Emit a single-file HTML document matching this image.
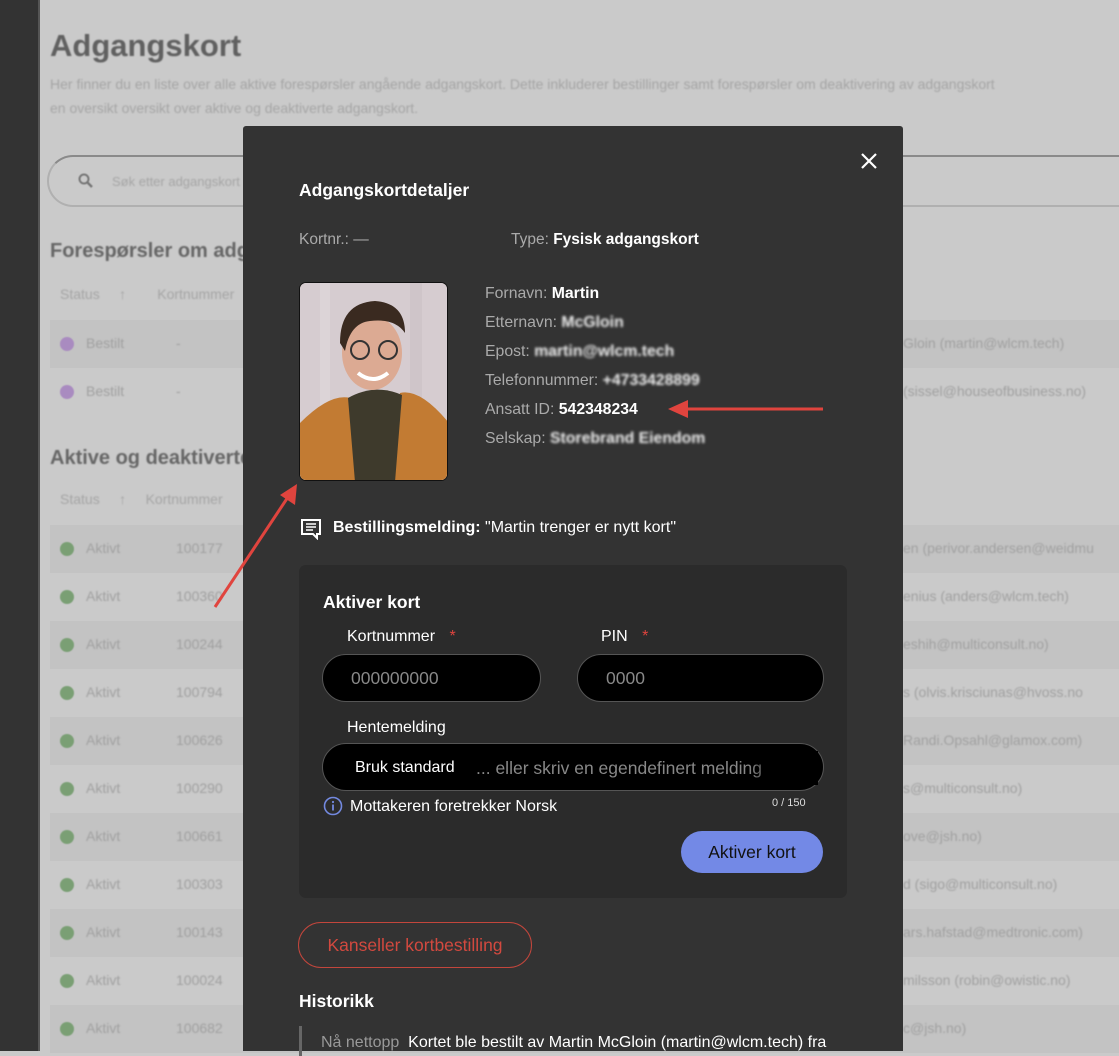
<!DOCTYPE html>
<html><head><meta charset="utf-8">
<style>
*{box-sizing:border-box;margin:0;padding:0}
body{width:1119px;height:1051px;overflow:hidden;background:#cacaca;font-family:"Liberation Sans",sans-serif;position:relative}
.abs{position:absolute}
.bg{color:#a5a5a5;filter:blur(0.8px)}
.row{position:absolute;left:50px;width:1069px;height:48px}
.row.sh{background:#c3c3c3}
.dot{position:absolute;left:10px;top:17px;width:14px;height:14px;border-radius:50%;filter:blur(0.5px)}
.row .st,.row .nr,.row .em{position:absolute;top:15px;font-size:14px;color:#a0a0a0;filter:blur(0.8px);white-space:nowrap}
.row .st{left:36px}.row .nr{left:126px}.row .em{left:853px}
.modal{position:absolute;left:243px;top:126px;width:660px;height:925px;background:#333;border-radius:3px 3px 0 0}
.m{position:absolute;color:#fff;white-space:nowrap}
.lbl{color:#aaa}
.blur{filter:blur(1.3px);font-weight:bold;color:#eee}
.inp{position:absolute;background:#000;border:1px solid #555;border-radius:25px;height:48px}
</style></head><body>
<div class="abs" style="left:0;top:0;width:38px;height:1051px;background:#333"></div>
<div class="abs" style="left:38px;top:0;width:2px;height:1051px;background:#555"></div>
<div class="abs bg" style="left:50px;top:28px;font-size:31px;font-weight:bold;color:#606060">Adgangskort</div>
<div class="abs bg" style="left:50px;top:72px;font-size:14px;line-height:24px;width:1080px;white-space:nowrap">Her finner du en liste over alle aktive forespørsler angående adgangskort. Dette inkluderer bestillinger samt forespørsler om deaktivering av adgangskort<br>en oversikt oversikt over aktive og deaktiverte adgangskort.</div>
<div class="abs" style="left:47px;top:155px;width:1100px;height:52px;border:2px solid #b0b0b0;border-top-color:#8a8a8a;border-radius:26px"></div>
<svg class="abs" style="left:77px;top:172px;filter:blur(0.5px)" width="18" height="18" viewBox="0 0 18 18"><circle cx="7" cy="7" r="4.5" fill="none" stroke="#777" stroke-width="2"/><path d="M10.5 10.5L15 15" stroke="#777" stroke-width="2.4"/></svg>
<div class="abs bg" style="left:112px;top:174px;font-size:13px">Søk etter adgangskort</div>
<div class="abs bg" style="left:50px;top:240px;font-size:20px;font-weight:bold;color:#666">Forespørsler om adgangskort</div>
<div class="abs bg" style="left:60px;top:286px;font-size:14px">Status &nbsp;&nbsp;&nbsp;&nbsp;↑&nbsp;&nbsp;&nbsp;&nbsp;&nbsp;&nbsp;&nbsp;&nbsp;Kortnummer</div>
<div class="row sh" style="top:320px"><div class="dot" style="background:#a98bc0"></div><div class="st">Bestilt</div><div class="nr">-</div><div class="em">Gloin (martin@wlcm.tech)</div></div>
<div class="row" style="top:368px"><div class="dot" style="background:#a98bc0"></div><div class="st">Bestilt</div><div class="nr">-</div><div class="em">(sissel@houseofbusiness.no)</div></div>
<div class="abs bg" style="left:50px;top:447px;font-size:20px;font-weight:bold;color:#666">Aktive og deaktiverte</div>
<div class="abs bg" style="left:60px;top:491px;font-size:14px">Status &nbsp;&nbsp;&nbsp;&nbsp;↑&nbsp;&nbsp;&nbsp;&nbsp;&nbsp;Kortnummer</div>
<div class="row sh" style="top:525px"><div class="dot" style="background:#7a9f74"></div><div class="st">Aktivt</div><div class="nr">100177</div><div class="em">en (perivor.andersen@weidmu</div></div>
<div class="row" style="top:573px"><div class="dot" style="background:#7a9f74"></div><div class="st">Aktivt</div><div class="nr">100360</div><div class="em">enius (anders@wlcm.tech)</div></div>
<div class="row sh" style="top:621px"><div class="dot" style="background:#7a9f74"></div><div class="st">Aktivt</div><div class="nr">100244</div><div class="em">eshih@multiconsult.no)</div></div>
<div class="row" style="top:669px"><div class="dot" style="background:#7a9f74"></div><div class="st">Aktivt</div><div class="nr">100794</div><div class="em">s (olvis.krisciunas@hvoss.no</div></div>
<div class="row sh" style="top:717px"><div class="dot" style="background:#7a9f74"></div><div class="st">Aktivt</div><div class="nr">100626</div><div class="em">Randi.Opsahl@glamox.com)</div></div>
<div class="row" style="top:765px"><div class="dot" style="background:#7a9f74"></div><div class="st">Aktivt</div><div class="nr">100290</div><div class="em">s@multiconsult.no)</div></div>
<div class="row sh" style="top:813px"><div class="dot" style="background:#7a9f74"></div><div class="st">Aktivt</div><div class="nr">100661</div><div class="em">ove@jsh.no)</div></div>
<div class="row" style="top:861px"><div class="dot" style="background:#7a9f74"></div><div class="st">Aktivt</div><div class="nr">100303</div><div class="em">d (sigo@multiconsult.no)</div></div>
<div class="row sh" style="top:909px"><div class="dot" style="background:#7a9f74"></div><div class="st">Aktivt</div><div class="nr">100143</div><div class="em">ars.hafstad@medtronic.com)</div></div>
<div class="row" style="top:957px"><div class="dot" style="background:#7a9f74"></div><div class="st">Aktivt</div><div class="nr">100024</div><div class="em">milsson (robin@owistic.no)</div></div>
<div class="row sh" style="top:1005px"><div class="dot" style="background:#7a9f74"></div><div class="st">Aktivt</div><div class="nr">100682</div><div class="em">c@jsh.no)</div></div>

<div class="modal">
<svg class="abs" style="left:616px;top:25px" width="20" height="20" viewBox="0 0 20 20"><path d="M3 3L17 17M17 3L3 17" stroke="#fff" stroke-width="2.2"/></svg>
<div class="m" style="left:56px;top:54px;font-size:17.5px;font-weight:bold">Adgangskortdetaljer</div>
<div class="m lbl" style="left:56px;top:105px;font-size:15.5px">Kortnr.: —</div>
<div class="m" style="left:268px;top:105px;font-size:15.5px"><span class="lbl">Type: </span><b>Fysisk adgangskort</b></div>
<div class="abs" style="left:56px;top:156px;width:149px;height:199px;border-radius:7px;border:1px solid #111;overflow:hidden;background:#d8cfd3">
<svg width="149" height="199" viewBox="0 0 149 199">
<rect width="149" height="199" fill="#d6ccd0"/>
<rect x="20" width="10" height="199" fill="#dcd4d7"/><rect x="110" width="12" height="199" fill="#cfc5c9"/>
<path d="M0 140 Q30 110 50 115 L75 200 L0 199Z" fill="#c27b33"/>
<path d="M149 140 Q120 105 100 110 L75 199 L149 199Z" fill="#c27b33"/>
<path d="M48 115 Q75 100 102 112 L95 199 L55 199Z" fill="#3e3a2c"/>
<ellipse cx="72" cy="70" rx="30" ry="37" fill="#dcaa93"/>
<path d="M40 60 Q40 20 75 18 Q105 20 105 50 Q95 35 70 38 Q50 40 45 68Z" fill="#3a2a20"/>
<circle cx="60" cy="67" r="9" fill="none" stroke="#333" stroke-width="2"/><circle cx="88" cy="67" r="9" fill="none" stroke="#333" stroke-width="2"/>
<path d="M58 90 Q73 102 88 90" stroke="#fff" stroke-width="4" fill="none"/>
</svg></div>
<div class="m" style="left:242px;top:153px;font-size:15.8px;line-height:29px">
<span class="lbl">Fornavn: </span><b>Martin</b><br>
<span class="lbl">Etternavn: </span><span class="blur">McGloin</span><br>
<span class="lbl">Epost: </span><span class="blur">martin@wlcm.tech</span><br>
<span class="lbl">Telefonnummer: </span><span class="blur">+4733428899</span><br>
<span class="lbl">Ansatt ID: </span><b>542348234</b><br>
<span class="lbl">Selskap: </span><span class="blur">Storebrand Eiendom</span></div>
<svg class="abs" style="left:57px;top:392px" width="22" height="22" viewBox="0 0 22 22"><path d="M2 2H20V16H17V20L13 16H2Z" fill="none" stroke="#fff" stroke-width="2"/><path d="M6 6H16M6 9H16M6 12H13" stroke="#fff" stroke-width="1.6"/></svg>
<div class="m" style="left:90px;top:393px;font-size:16px"><b>Bestillingsmelding:</b> "Martin trenger er nytt kort"</div>
<div class="abs" style="left:56px;top:439px;width:548px;height:333px;background:#2b2b2b;border-radius:7px"></div>
<div class="m" style="left:80px;top:466px;font-size:17.5px;font-weight:bold">Aktiver kort</div>
<div class="m" style="left:104px;top:502px;font-size:16px">Kortnummer <span style="color:#e0443e;margin-left:10px">*</span></div>
<div class="m" style="left:358px;top:502px;font-size:16px">PIN <span style="color:#e0443e;margin-left:10px">*</span></div>
<div class="inp" style="left:79px;top:528px;width:219px"></div>
<div class="inp" style="left:334px;top:528px;width:247px"></div>
<div class="m" style="left:108px;top:542px;font-size:17.5px;color:#888">000000000</div>
<div class="m" style="left:363px;top:542px;font-size:17.5px;color:#888">0000</div>
<div class="m" style="left:104px;top:593px;font-size:16px">Hentemelding</div>
<div class="inp" style="left:79px;top:617px;width:502px"></div>
<div class="m" style="left:112px;top:633px;font-size:16px">Bruk standard</div>
<div class="m" style="left:233px;top:632px;font-size:17.5px;color:#888">... eller skriv en egendefinert melding</div>
<div class="abs" style="left:505px;top:625px;width:70px;height:34px;background:linear-gradient(90deg,rgba(0,0,0,0),#000 60%)"></div>
<svg class="abs" style="left:80px;top:670px" width="20" height="20" viewBox="0 0 20 20"><circle cx="10" cy="10" r="8.5" fill="none" stroke="#7389e0" stroke-width="1.6"/><path d="M10 8.5V14.5" stroke="#7389e0" stroke-width="1.8"/><circle cx="10" cy="6" r="1.1" fill="#7389e0"/></svg>
<div class="m" style="left:107px;top:672px;font-size:16px">Mottakeren foretrekker Norsk</div>
<div class="m" style="left:529px;top:671px;font-size:11px;color:#ddd">0 / 150</div>
<div class="abs" style="left:438px;top:705px;width:142px;height:42px;background:#7389e6;border-radius:21px;color:#111;font-size:17.5px;text-align:center;line-height:42px">Aktiver kort</div>
<div class="abs" style="left:55px;top:796px;width:234px;height:46px;border:1px solid #c3463c;border-radius:23px;color:#d2493f;font-size:17.5px;text-align:center;line-height:44px">Kanseller kortbestilling</div>
<div class="m" style="left:56px;top:865px;font-size:17.5px;font-weight:bold">Historikk</div>
<div class="abs" style="left:56px;top:900px;width:3px;height:30px;background:#666"></div>
<div class="m" style="left:78px;top:908px;font-size:16px"><span style="color:#999">Nå nettopp</span>&nbsp; Kortet ble bestilt av Martin McGloin (martin@wlcm.tech) fra</div>
</div>
<svg class="abs" style="left:0;top:0" width="1119" height="1051">
<path d="M823 409L680 409" stroke="#e0443e" stroke-width="3"/><path d="M668 409L688 400L688 418Z" fill="#e0443e"/>
<path d="M215 607L290 494" stroke="#e0443e" stroke-width="3"/><path d="M297 484L295 505L280 495Z" fill="#e0443e"/>
</svg>
</body></html>
